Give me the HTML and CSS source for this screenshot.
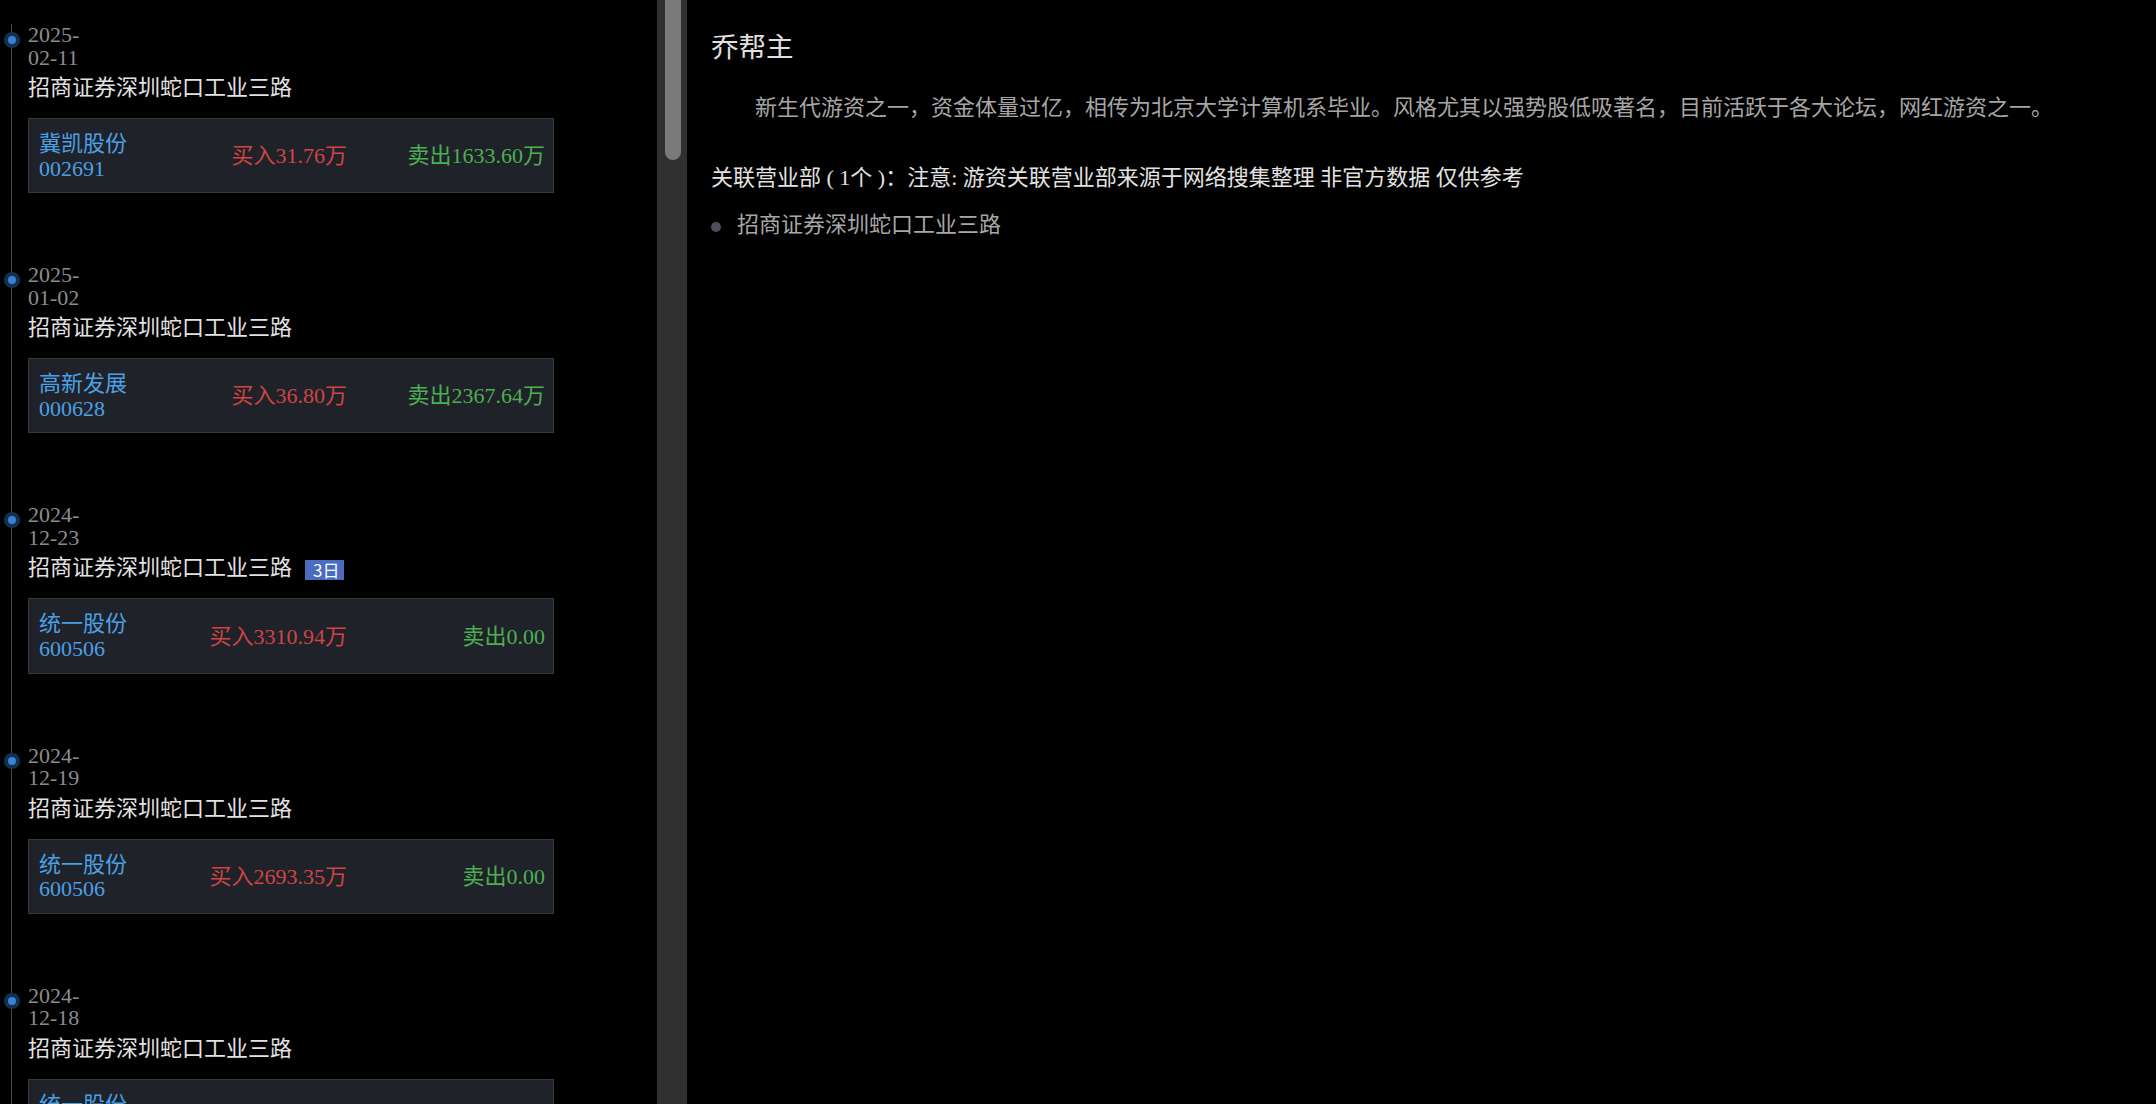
FILE: index.html
```html
<!DOCTYPE html>
<html lang="zh-CN">
<head>
<meta charset="utf-8">
<title>乔帮主</title>
<link rel="stylesheet" href="styles.css">
</head>
<body>
<div class="page">
  <aside class="timeline-pane">
    <ul class="timeline">
      <li class="tl-item"><span class="tl-dot"></span>
        <div class="tl-date">2025-<br>02-11</div>
        <div class="tl-branch">招商证券深圳蛇口工业三路</div>
        <div class="deal"><div class="deal-stock"><div>冀凯股份</div><div>002691</div></div><div class="deal-buy">买入31.76万</div><div class="deal-sell">卖出1633.60万</div></div>
      </li>
      <li class="tl-item"><span class="tl-dot"></span>
        <div class="tl-date">2025-<br>01-02</div>
        <div class="tl-branch">招商证券深圳蛇口工业三路</div>
        <div class="deal"><div class="deal-stock"><div>高新发展</div><div>000628</div></div><div class="deal-buy">买入36.80万</div><div class="deal-sell">卖出2367.64万</div></div>
      </li>
      <li class="tl-item"><span class="tl-dot"></span>
        <div class="tl-date">2024-<br>12-23</div>
        <div class="tl-branch">招商证券深圳蛇口工业三路<span class="tl-tag">3日</span></div>
        <div class="deal"><div class="deal-stock"><div>统一股份</div><div>600506</div></div><div class="deal-buy">买入3310.94万</div><div class="deal-sell">卖出0.00</div></div>
      </li>
      <li class="tl-item"><span class="tl-dot"></span>
        <div class="tl-date">2024-<br>12-19</div>
        <div class="tl-branch">招商证券深圳蛇口工业三路</div>
        <div class="deal"><div class="deal-stock"><div>统一股份</div><div>600506</div></div><div class="deal-buy">买入2693.35万</div><div class="deal-sell">卖出0.00</div></div>
      </li>
      <li class="tl-item"><span class="tl-dot"></span>
        <div class="tl-date">2024-<br>12-18</div>
        <div class="tl-branch">招商证券深圳蛇口工业三路</div>
        <div class="deal"><div class="deal-stock"><div>统一股份</div><div>600506</div></div><div class="deal-buy">买入2218.47万</div><div class="deal-sell">卖出0.00</div></div>
      </li>
    </ul>
    <div class="scrollbar"><div class="scrollbar-thumb"></div></div>
  </aside>
  <main class="detail">
    <h1 class="detail-title">乔帮主</h1>
    <p class="detail-desc">新生代游资之一，资金体量过亿，相传为北京大学计算机系毕业。风格尤其以强势股低吸著名，目前活跃于各大论坛，网红游资之一。</p>
    <div class="detail-rel">关联营业部 ( 1个 )：注意: 游资关联营业部来源于网络搜集整理 非官方数据 仅供参考</div>
    <ul class="rel-list">
      <li class="rel-item"><span class="rel-dot"></span>招商证券深圳蛇口工业三路</li>
    </ul>
  </main>
</div>
</body>
</html>
```

FILE: styles.css
```css
html, body {
  margin: 0;
  height: 100%;
  background: #000;
}

body {
  font-family: "Liberation Serif", "Noto Sans CJK SC", serif;
  font-size: 22px;
  overflow: hidden;
}

.page {
  display: flex;
  height: 100vh;
}

/* ---------- left timeline ---------- */
.timeline-pane {
  flex: none;
  width: 687px;
  height: 100%;
  display: flex;
  overflow: hidden;
}

.timeline {
  flex: 1;
  min-width: 0;
  list-style: none;
  margin: 0;
  padding: 24px 0 0;
  overflow: hidden;
}

.scrollbar {
  flex: none;
  width: 30px;
  background: #303030;
}

.scrollbar-thumb {
  width: 16px;
  height: 160px;
  margin-left: 8px;
  background: #7a7a7a;
  border-radius: 0 0 8px 8px;
}

.tl-item {
  position: relative;
  margin-left: 11px;
  border-left: 1px solid #4a4a4a;
  padding: 0 0 71px 16px;
}

.tl-dot {
  position: absolute;
  left: -4.5px;
  top: 12px;
  width: 8px;
  height: 8px;
  border-radius: 50%;
  background: #3a80d4;
  box-shadow: 0 0 0 4px #15304f;
}

.tl-date {
  color: #8c8c8c;
  line-height: 22.5px;
}

.tl-branch {
  margin-top: 6px;
  color: #e2e2e2;
  line-height: 26px;
  white-space: nowrap;
}

.tl-tag {
  display: inline-block;
  vertical-align: -2px;
  margin-left: 13px;
  height: 20px;
  padding: 0 5px 0 8px;
  background: #4a6cc0;
  color: #fff;
  font-family: "Noto Sans CJK SC", sans-serif;
  font-size: 17px;
  line-height: 20px;
}

.deal {
  box-sizing: border-box;
  width: 526px;
  margin-top: 17px;
  display: flex;
  align-items: center;
  padding: 13px 8px 11px 10px;
  background: #1f2229;
  border: 1px solid #343840;
  line-height: 24.6px;
  white-space: nowrap;
}

.deal-stock {
  flex: none;
  width: 110px;
  color: #4ba0e6;
}

.deal-buy {
  flex: 1;
  text-align: right;
  color: #cf4545;
}

.deal-sell {
  flex: 1;
  text-align: right;
  color: #4caf50;
}

/* ---------- right detail ---------- */
.detail {
  flex: 1;
  min-width: 0;
  padding: 27px 24px 0;
  color: #a6a6a6;
}

.detail-title {
  margin: 0;
  font-size: 27.5px;
  font-weight: normal;
  line-height: 41.6px;
  color: #e0e0e0;
}

.detail-desc {
  margin: 22px 0 0;
  text-indent: 2em;
  line-height: 33px;
  color: #a6a6a6;
}

.detail-rel {
  margin-top: 37px;
  line-height: 33px;
  color: #e2e2e2;
}

.rel-list {
  list-style: none;
  margin: 14px 0 0;
  padding: 0;
}

.rel-item {
  display: flex;
  align-items: center;
  gap: 16px;
  line-height: 33px;
  color: #a6a6a6;
}

.rel-dot {
  flex: none;
  width: 10px;
  height: 10px;
  margin-top: 6px;
  border-radius: 50%;
  background: #4b5058;
}
```
